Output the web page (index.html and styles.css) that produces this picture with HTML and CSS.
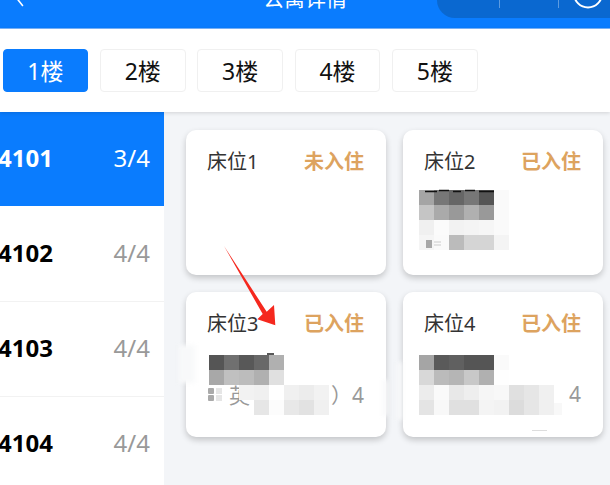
FILE: index.html
```html
<!DOCTYPE html>
<html lang="zh">
<head>
<meta charset="utf-8">
<title>公寓详情</title>
<link rel="stylesheet" href="styles.css">
</head>
<body>
<div class="app">
  <header class="nav">
    <svg class="back" width="14" height="10" viewBox="0 0 14 10"><path d="M2 -4L9.5 5.5" fill="none" stroke="#fff" stroke-width="1.6" stroke-linecap="round"/></svg>
    <div class="title">公寓详情</div>
    <div class="capsule">
      <i class="sep sep-a"></i>
      <i class="sep sep-b"></i>
      <svg class="ring" width="34" height="10" viewBox="0 0 34 10"><circle cx="17" cy="-6.5" r="14" fill="none" stroke="#fff" stroke-width="2"/></svg>
    </div>
  </header>
  <nav class="floors">
    <div class="floor active">1楼</div>
    <div class="floor">2楼</div>
    <div class="floor">3楼</div>
    <div class="floor">4楼</div>
    <div class="floor">5楼</div>
  </nav>
  <main class="body">
    <aside class="rooms">
      <div class="room active"><b>4101</b><span>3/4</span></div>
      <div class="room"><b>4102</b><span>4/4</span></div>
      <div class="room"><b>4103</b><span>4/4</span></div>
      <div class="room"><b>4104</b><span>4/4</span></div>
    </aside>
    <section class="beds">
      <article class="bed">
        <div class="bed-head"><span>床位1</span><em>未入住</em></div>
      </article>
      <article class="bed">
        <div class="bed-head"><span>床位2</span><em>已入住</em></div>
        <svg class="mosaic m2" width="90" height="60" viewBox="0 0 90 60">
          <g shape-rendering="crispEdges">
          <g><rect x="0" width="15" height="15" fill="#a5a5a5"/><rect x="15" width="15" height="15" fill="#777"/><rect x="30" width="15" height="15" fill="#666"/><rect x="45" width="15" height="15" fill="#777"/><rect x="60" width="15" height="15" fill="#555"/><rect x="75" width="15" height="15" fill="#fafafa"/></g>
          <g transform="translate(0 15)"><rect x="0" width="15" height="15" fill="#c5c5c5"/><rect x="15" width="15" height="15" fill="#aaa"/><rect x="30" width="15" height="15" fill="#999"/><rect x="45" width="15" height="15" fill="#b0b0b0"/><rect x="60" width="15" height="15" fill="#999"/><rect x="75" width="15" height="15" fill="#fafafa"/></g>
          <g transform="translate(0 30)"><rect x="0" width="15" height="15" fill="#f0f0f0"/><rect x="15" width="15" height="15" fill="#fbfbfb"/><rect x="30" width="15" height="15" fill="#f2f2f2"/><rect x="45" width="15" height="15" fill="#f4f4f4"/><rect x="60" width="15" height="15" fill="#f6f6f6"/><rect x="75" width="15" height="15" fill="#fafafa"/></g>
          <g transform="translate(0 45)"><rect x="0" width="15" height="15" fill="#f5f5f5"/><rect x="15" width="15" height="15" fill="#fafafa"/><rect x="30" width="15" height="15" fill="#bbb"/><rect x="45" width="15" height="15" fill="#d5d5d5"/><rect x="60" width="15" height="15" fill="#d5d5d5"/><rect x="75" width="15" height="15" fill="#f4f4f4"/></g>
          </g>
          <path d="M6 1.5h12M20 .5h10M34 1.5h8M46 .5h10M60 1.5h15" stroke="#111" stroke-width="1.4"/>
          <rect x="7" y="50" width="6" height="8" fill="#a8a8a8"/>
          <path d="M15 52h7M15 55h7" stroke="#ccc"/>
        </svg>
      </article>
      <article class="bed">
        <div class="bed-head"><span>床位3</span><em>已入住</em></div>
        <div class="bed-meta">
          <svg class="list-icon" width="15" height="15" viewBox="0 0 15 15"><rect x="0" y="1" width="6" height="6" rx="1" fill="#aaa"/><rect x="0" y="8" width="6" height="6" rx="1" fill="#aaa"/><path d="M8 2h6M8 4h6M8 6h6M8 9h6M8 11h6M8 13h6" stroke="#ccc"/></svg>
          <span class="meta-text">英</span>
          <span class="meta-end">）4</span>
        </div>
        <svg class="mosaic m3" width="120" height="60" viewBox="0 0 120 60">
          <g shape-rendering="crispEdges">
          <rect x="0" y="0" width="15" height="15" fill="#555"/><rect x="15" y="0" width="15" height="15" fill="#707070"/><rect x="30" y="0" width="15" height="15" fill="#585858"/><rect x="45" y="0" width="15" height="15" fill="#686868"/><rect x="60" y="0" width="15" height="15" fill="#b0b0b0"/>
          <rect x="0" y="15" width="15" height="15" fill="#a8a8a8"/><rect x="15" y="15" width="15" height="15" fill="#c0c0c0"/><rect x="30" y="15" width="15" height="15" fill="#bcbcbc"/><rect x="45" y="15" width="15" height="15" fill="#b0b0b0"/><rect x="60" y="15" width="15" height="15" fill="#e0e0e0"/>
          <rect x="30" y="30" width="15" height="15" fill="#f2f2f2"/><rect x="45" y="30" width="15" height="15" fill="#f0f0f0"/><rect x="60" y="30" width="15" height="15" fill="#fff"/><rect x="75" y="30" width="15" height="15" fill="#f0f0f0"/><rect x="90" y="30" width="15" height="15" fill="#ececec"/><rect x="105" y="30" width="15" height="15" fill="#f2f2f2"/>
          <rect x="45" y="45" width="15" height="15" fill="#e6e6e6"/><rect x="60" y="45" width="15" height="15" fill="#fcfcfc"/><rect x="75" y="45" width="15" height="15" fill="#e8e8e8"/><rect x="90" y="45" width="15" height="15" fill="#e2e2e2"/><rect x="105" y="45" width="15" height="15" fill="#f0f0f0"/>
          </g>
          <path d="M58 -1h7" stroke="#111" stroke-width="1.4"/>
        </svg>
      </article>
      <article class="bed">
        <div class="bed-head"><span>床位4</span><em>已入住</em></div>
        <div class="bed-meta end"><span class="meta-end">4</span></div>
        <svg class="mosaic m4" width="150" height="80" viewBox="0 0 150 80">
          <g shape-rendering="crispEdges">
          <rect x="0" y="0" width="15" height="15" fill="#a5a5a5"/><rect x="15" y="0" width="15" height="15" fill="#5a5a5a"/><rect x="30" y="0" width="15" height="15" fill="#606060"/><rect x="45" y="0" width="15" height="15" fill="#555"/><rect x="60" y="0" width="15" height="15" fill="#555"/><rect x="75" y="0" width="15" height="15" fill="#fafafa"/>
          <rect x="0" y="15" width="15" height="15" fill="#d8d8d8"/><rect x="15" y="15" width="15" height="15" fill="#bbb"/><rect x="30" y="15" width="15" height="15" fill="#b5b5b5"/><rect x="45" y="15" width="15" height="15" fill="#c8c8c8"/><rect x="60" y="15" width="15" height="15" fill="#b0b0b0"/><rect x="75" y="15" width="15" height="15" fill="#fefefe"/>
          <rect x="0" y="30" width="15" height="15" fill="#ececec"/><rect x="15" y="30" width="15" height="15" fill="#fafafa"/><rect x="30" y="30" width="15" height="15" fill="#e8e8e8"/><rect x="45" y="30" width="15" height="15" fill="#eee"/><rect x="60" y="30" width="15" height="15" fill="#f6f6f6"/><rect x="75" y="30" width="15" height="15" fill="#f8f8f8"/><rect x="90" y="30" width="15" height="15" fill="#e0e0e0"/><rect x="105" y="30" width="15" height="15" fill="#e6e6e6"/><rect x="120" y="30" width="15" height="15" fill="#f0f0f0"/>
          <rect x="0" y="45" width="15" height="15" fill="#e4e4e4"/><rect x="15" y="45" width="15" height="15" fill="#f8f8f8"/><rect x="30" y="45" width="15" height="15" fill="#e0e0e0"/><rect x="45" y="45" width="15" height="15" fill="#e0e0e0"/><rect x="60" y="45" width="15" height="15" fill="#f4f4f4"/><rect x="75" y="45" width="15" height="15" fill="#f2f2f2"/><rect x="90" y="45" width="15" height="15" fill="#dcdcdc"/><rect x="105" y="45" width="15" height="15" fill="#e6e6e6"/><rect x="120" y="45" width="15" height="15" fill="#f0f0f0"/><rect x="135" y="48" width="8" height="12" fill="#f8f8f8"/>
          <rect x="113" y="75" width="15" height="1" fill="#ddd"/>
          </g>
        </svg>
      </article>
      <i class="smudge smudge-a"></i>
      <i class="smudge smudge-b"></i>
      <i class="smudge smudge-c"></i>
      <svg class="arrow" width="60" height="85" viewBox="0 0 60 85"><polygon points="2,1 44.7,66.7 52,60 53.3,80.3 35.3,74.3 40.7,69" fill="#f5281e"/></svg>
    </section>
  </main>
</div>
</body>
</html>
```
FILE: styles.css
```css
* { box-sizing: border-box; }
html, body { margin: 0; height: 100%; overflow: hidden; }
body { font-family: "Noto Sans", "Noto Sans CJK SC", sans-serif; background: #f3f5f8; color: #222; }
.app { display: flex; flex-direction: column; height: 485px; overflow: hidden; }
.nav { position: relative; height: 29px; flex: none; background: #0a7cfe; border-bottom: 1px solid #7ab5fd; overflow: hidden; }
.back { position: absolute; left: 13px; top: 0; }
.title { position: absolute; left: 0; right: 0; bottom: 15px; text-align: center; color: #fff; font-size: 21px; line-height: 30px; }
.capsule { position: absolute; left: 437px; top: -30px; width: 200px; height: 48px; border-radius: 18px; background: #0a68d0; }
.sep { position: absolute; top: 30px; width: 1px; height: 8px; background: #5c9be0; }
.sep-a { left: 62px; }
.sep-b { left: 121px; }
.ring { position: absolute; left: 134px; top: 30px; }
.floors { flex: none; height: 83px; background: #fff; padding: 20px 0 0 2.5px; display: flex; gap: 11.7px; align-items: flex-start; box-shadow: 0 1px 4px rgba(0,0,0,.14); position: relative; z-index: 1; }
.floor { width: 85.7px; height: 43px; display: flex; align-items: center; justify-content: center; padding-bottom: 2px; border: 1px solid #f0f0f0; border-radius: 4px; font-size: 23px; color: #111; background: #fff; }
.floor.active { background: #0a7cfe; border-color: #0a7cfe; color: #fff; }
.body { flex: 1; display: flex; min-height: 0; }
.rooms { width: 164px; flex: none; background: #fff; }
.room { height: 95px; display: flex; justify-content: space-between; align-items: center; padding-right: 14px; padding-bottom: 3px; border-bottom: 1px solid #f2f2f2; font-size: 24px; color: #999; }
.room:first-child { height: 94px; }
.room:nth-child(2) { height: 96px; }
.room b { margin-left: -2px; color: #000; font-weight: 700; }
.room.active { background: #0a7cfe; color: #fff; border-bottom-color: #0a7cfe; }
.room.active b { color: #fff; }
.beds { position: relative; flex: 1; display: grid; grid-template-columns: 200px 200px; grid-template-rows: 144.5px 145px; column-gap: 17px; row-gap: 17.5px; padding: 18px 0 0 22px; align-content: start; }
.bed { position: relative; background: #fff; border-radius: 10px; box-shadow: 0 3px 6px rgba(0,0,0,.2); padding: 16px 22px 0 21px; }
.bed-head { display: flex; justify-content: space-between; align-items: center; height: 28px; }
.bed-head span { font-size: 20px; color: #333; }
.bed-head em { font-style: normal; font-size: 20px; font-weight: 700; color: #dda35f; }
.bed-meta { display: flex; align-items: center; margin-top: 44px; height: 28px; color: #999; font-size: 21px; }
.bed-meta.end { justify-content: flex-end; }
.list-icon { margin-left: 1px; margin-right: 6px; }
.meta-text { flex: 1; }
.meta-end { white-space: nowrap; }
.mosaic { position: absolute; filter: blur(.4px); overflow: visible; }
.m2 { left: 16px; top: 60px; }
.m3 { left: 23px; top: 63px; }
.m4 { left: 16px; top: 63px; }
.smudge { position: absolute; background: #f8f9fa; filter: blur(2px); }
.smudge-a { left: 15px; top: 233px; width: 16px; height: 38px; }
.smudge-b { left: 219px; top: 268px; width: 5px; height: 36px; }
.smudge-c { left: 233px; top: 250px; width: 5px; height: 58px; }
.arrow { position: absolute; left: 58px; top: 133px; z-index: 2; }
```
